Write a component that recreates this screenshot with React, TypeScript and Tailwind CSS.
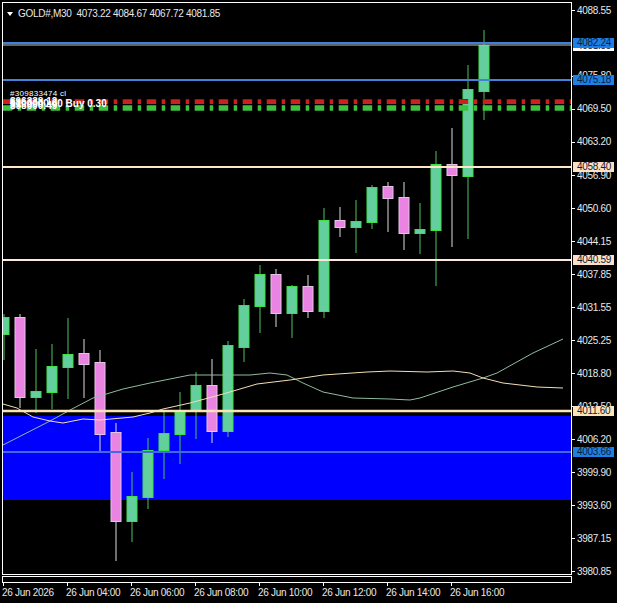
import React from 'react';

type Candle = { x: number; o: number; c: number; hi: number; lo: number; up: boolean };

// [body top, body bottom, wick top, wick bottom, bullish] in page pixels
const rows: [number, number, number, number, boolean][] = [
  [317, 334, 314, 360, true],
  [317, 397, 314, 408, false],
  [391, 397, 349, 413, true],
  [366, 392, 344, 409, true],
  [354, 367, 318, 399, true],
  [353, 364, 339, 398, false],
  [362, 434, 350, 451, false],
  [432, 521, 423, 561, false],
  [496, 521, 472, 542, true],
  [450, 497, 438, 509, true],
  [433, 450, 412, 479, true],
  [412, 434, 392, 464, true],
  [385, 411, 372, 439, true],
  [385, 431, 359, 443, false],
  [345, 431, 341, 437, true],
  [305, 347, 299, 362, true],
  [274, 306, 265, 333, true],
  [274, 313, 269, 327, false],
  [286, 313, 285, 338, true],
  [286, 311, 275, 318, false],
  [220, 311, 208, 318, true],
  [220, 227, 207, 237, false],
  [221, 227, 200, 253, true],
  [187, 222, 185, 229, true],
  [186, 198, 182, 232, false],
  [197, 233, 182, 250, false],
  [229, 233, 203, 254, true],
  [164, 230, 151, 286, true],
  [164, 175, 128, 247, false],
  [89, 176, 65, 239, true],
  [45, 91, 30, 120, true],
];

const candles: Candle[] = rows.map(([o, c, hi, lo, up], i) => ({ x: 3.5 + i * 16, o, c, hi, lo, up }));

const maGreen =
  '3,445 50,421 72,409 93,398 123,389 150,383 180,377 190,375 250,375 270,373 287,375 303,383 323,392 353,398 390,399 410,400 420,398 453,387 483,378 497,373 533,353 563,339';
const maPeach =
  '3,404 17,408 33,417 50,421 63,423 83,419 100,420 133,417 150,413 163,409 190,403 223,394 257,384 290,380 323,375 367,372 390,371 427,372 453,371 470,373 483,378 503,383 537,387 563,388';

const scale: [string, number][] = [
  ['4088.55', 10.5],
  ['4075.80', 76],
  ['4069.50', 109],
  ['4063.20', 142],
  ['4056.90', 175.5],
  ['4050.60', 208.5],
  ['4044.15', 241.5],
  ['4037.85', 274.5],
  ['4031.55', 307.5],
  ['4025.25', 340.5],
  ['4018.80', 373.5],
  ['4012.50', 406.5],
  ['4006.20', 439.5],
  ['3999.90', 472.5],
  ['3993.60', 505.5],
  ['3987.15', 538.5],
  ['3980.85', 571.5],
];

const tags: { label: string; y: number; bg: string }[] = [
  { label: '4081.85', y: 45.5, bg: 'bg-white' },
  { label: '4082.24', y: 42.5, bg: 'bg-[#1e80e6]' },
  { label: '4075.18', y: 79.5, bg: 'bg-[#1e80e6]' },
  { label: '4058.40', y: 166.5, bg: 'bg-[#fde0c4]' },
  { label: '4040.59', y: 260, bg: 'bg-[#fde0c4]' },
  { label: '4011.60', y: 411, bg: 'bg-[#fde4b8]' },
  { label: '4003.66', y: 451.5, bg: 'bg-[#1e80e6]' },
];

const times = [
  '26 Jun 2026',
  '26 Jun 04:00',
  '26 Jun 06:00',
  '26 Jun 08:00',
  '26 Jun 10:00',
  '26 Jun 12:00',
  '26 Jun 14:00',
  '26 Jun 16:00',
];

const ChartLines = () => (
  <svg className="block" width={568} height={571} viewBox="3 3 568 571">
    {/* demand zone */}
    <rect x={3} y={416} width={568} height={84} fill="#0000ff" />

    {candles.map((k) => (
      <g key={k.x}>
        <line x1={k.x + 0.5} x2={k.x + 0.5} y1={k.hi} y2={k.lo} stroke={k.up ? '#4fc45a' : '#dcdcdc'} strokeWidth={1} />
        <rect
          x={k.x - 4.5}
          y={k.o + 0.5}
          width={10}
          height={k.c - k.o}
          fill={k.up ? '#62cf9c' : '#ea84e2'}
          stroke={k.up ? '#3fe04a' : '#e6c4e6'}
          strokeWidth={1}
        />
      </g>
    ))}

    {/* moving averages */}
    <polyline points={maGreen} fill="none" stroke="#8fbc9f" strokeWidth={1} />
    <polyline points={maPeach} fill="none" stroke="#f5deb3" strokeWidth={1} />

    {/* levels */}
    <line x1={3} x2={571} y1={43} y2={43} stroke="#3f80d8" strokeWidth={2} />
    <line x1={3} x2={571} y1={45} y2={45} stroke="#b8c8d8" strokeWidth={1} />
    <line x1={3} x2={571} y1={80} y2={80} stroke="#4382d4" strokeWidth={2} />
    <line x1={3} x2={571} y1={102} y2={102} stroke="#cc221c" strokeWidth={4} strokeDasharray="9.5 5.5 3.5 5.5" strokeDashoffset={0.3} />
    <line x1={3} x2={571} y1={99.5} y2={99.5} stroke="#8a1c16" strokeWidth={1} strokeDasharray="9.5 5.5 3.5 5.5" strokeDashoffset={0.3} />
    <line x1={3} x2={571} y1={108} y2={108} stroke="#40c040" strokeWidth={5.4} strokeDasharray="9.5 5.5 3.5 5.5" strokeDashoffset={0.3} />
    <line x1={3} x2={571} y1={167} y2={167} stroke="#fde8cc" strokeWidth={2} />
    <line x1={3} x2={571} y1={260} y2={260} stroke="#ffe8dc" strokeWidth={2} />
    <line x1={3} x2={571} y1={411} y2={411} stroke="#fde4b8" strokeWidth={2.5} />
    <line x1={3} x2={571} y1={452} y2={452} stroke="#4169e8" strokeWidth={2} />
  </svg>
);

const App = () => {
  return (
    <div className="w-[617px] h-[603px] overflow-hidden bg-black pt-[2px] pl-[2px] text-white font-['Liberation_Sans',sans-serif] text-[10px] tracking-[-0.3px] leading-none">
      <div className="flex">
        {/* Main chart pane */}
        <div className="relative w-[570px] h-[573px] border border-white shrink-0">
          <ChartLines />

          <div className="absolute left-[4px] top-[6px] flex items-center gap-[5px] text-[#e8e8e8] whitespace-pre">
            <span className="w-0 h-0 border-x-[3.5px] border-x-transparent border-t-[4px] border-t-white" />
            <span>GOLD#,M30  4073.22 4084.67 4067.72 4081.85</span>
          </div>

          {/* overlapping account labels */}
          <div className="absolute left-[7px] top-[87px] text-[8px] tracking-[0.3px] whitespace-pre">#309833474 cl</div>
          <div className="absolute left-[7px] top-[96px] text-[10px] tracking-normal font-bold whitespace-pre">$100000.00 Buy 0.30</div>
          <div className="absolute left-[7px] top-[98px] text-[10px] tracking-normal font-bold whitespace-pre">$98000.49</div>
          <div className="absolute left-[7px] top-[94px] text-[10px] tracking-normal font-bold whitespace-pre">$96338.12</div>
        </div>

        {/* Price scale */}
        <div className="relative w-[45px] h-[573px]">
          {scale.map(([label, y]) => (
            <div key={label} className="absolute left-0 flex items-center h-[10px]" style={{ top: y - 7 }}>
              <span className="w-[3px] h-px bg-white" />
              <span className="ml-[2px] text-[#e8e8e8]">{label}</span>
            </div>
          ))}
          {tags.map((t) => (
            <div
              key={t.label}
              className={`absolute left-px w-[41px] h-[10px] pl-[4px] flex items-center text-[#10203a] ${t.bg}`}
              style={{ top: t.y - 7 }}
            >
              {t.label}
            </div>
          ))}
        </div>
      </div>

      {/* Empty sub-window strip */}
      <div className="mt-px w-[570px] h-[7px] border border-white" />

      {/* Time scale */}
      <div className="flex pl-px">
        {times.map((t) => (
          <div key={t} className="w-[64px] shrink-0">
            <div className="w-px h-[3px] bg-white" />
            <div className="mt-[2px] -ml-px text-[#e8e8e8] whitespace-nowrap">{t}</div>
          </div>
        ))}
      </div>
    </div>
  );
};

export default App;
